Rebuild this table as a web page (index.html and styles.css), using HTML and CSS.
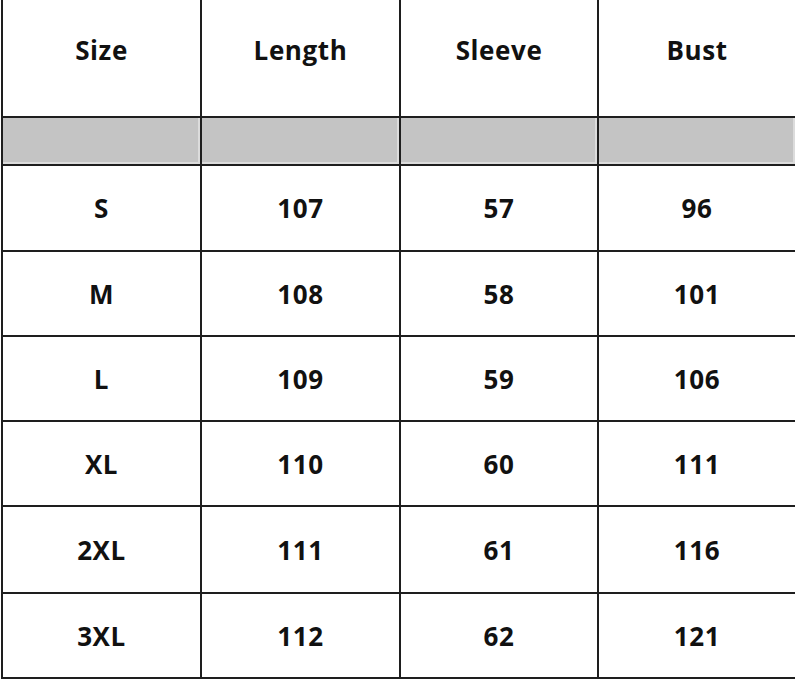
FILE: index.html
```html
<!DOCTYPE html>
<html>
<head>
<meta charset="utf-8">
<link rel="stylesheet" href="styles.css">
</head>
<body>
<div class="chart">
  <div class="cell head">Size</div>
  <div class="cell head">Length</div>
  <div class="cell head">Sleeve</div>
  <div class="cell head">Bust</div>
  <div class="cell blank"></div>
  <div class="cell blank"></div>
  <div class="cell blank"></div>
  <div class="cell blank"></div>
  <div class="cell">S</div><div class="cell">107</div><div class="cell">57</div><div class="cell">96</div>
  <div class="cell">M</div><div class="cell">108</div><div class="cell">58</div><div class="cell">101</div>
  <div class="cell">L</div><div class="cell">109</div><div class="cell">59</div><div class="cell">106</div>
  <div class="cell">XL</div><div class="cell">110</div><div class="cell">60</div><div class="cell">111</div>
  <div class="cell">2XL</div><div class="cell">111</div><div class="cell">61</div><div class="cell">116</div>
  <div class="cell">3XL</div><div class="cell">112</div><div class="cell">62</div><div class="cell">121</div>
</div>
</body>
</html>
```
FILE: styles.css
```css
html, body {
  margin: 0;
  padding: 0;
  background: #ffffff;
}
.chart {
  display: grid;
  grid-template-columns: 197px 197px 196px 196px;
  grid-template-rows: 116px 46px 84px 83px 83px 83px 85px 83px;
  column-gap: 2px;
  row-gap: 2px;
  width: 794px;
  margin-left: 1px;
  padding: 0 2px 2px 2px;
  box-sizing: border-box;
  background: #1e1e1e;
}
.cell {
  background: #ffffff;
  display: flex;
  align-items: center;
  justify-content: center;
  font-family: "Open Sans", "DejaVu Sans", sans-serif;
  font-weight: 700;
  font-size: 26px;
  letter-spacing: 0.6px;
  color: #111111;
}
.head {
  padding-bottom: 16px;
  box-sizing: border-box;
}
.blank {
  background: #c4c4c4;
  box-shadow: inset -2px -2px 0 #dcdcdc;
}
```
